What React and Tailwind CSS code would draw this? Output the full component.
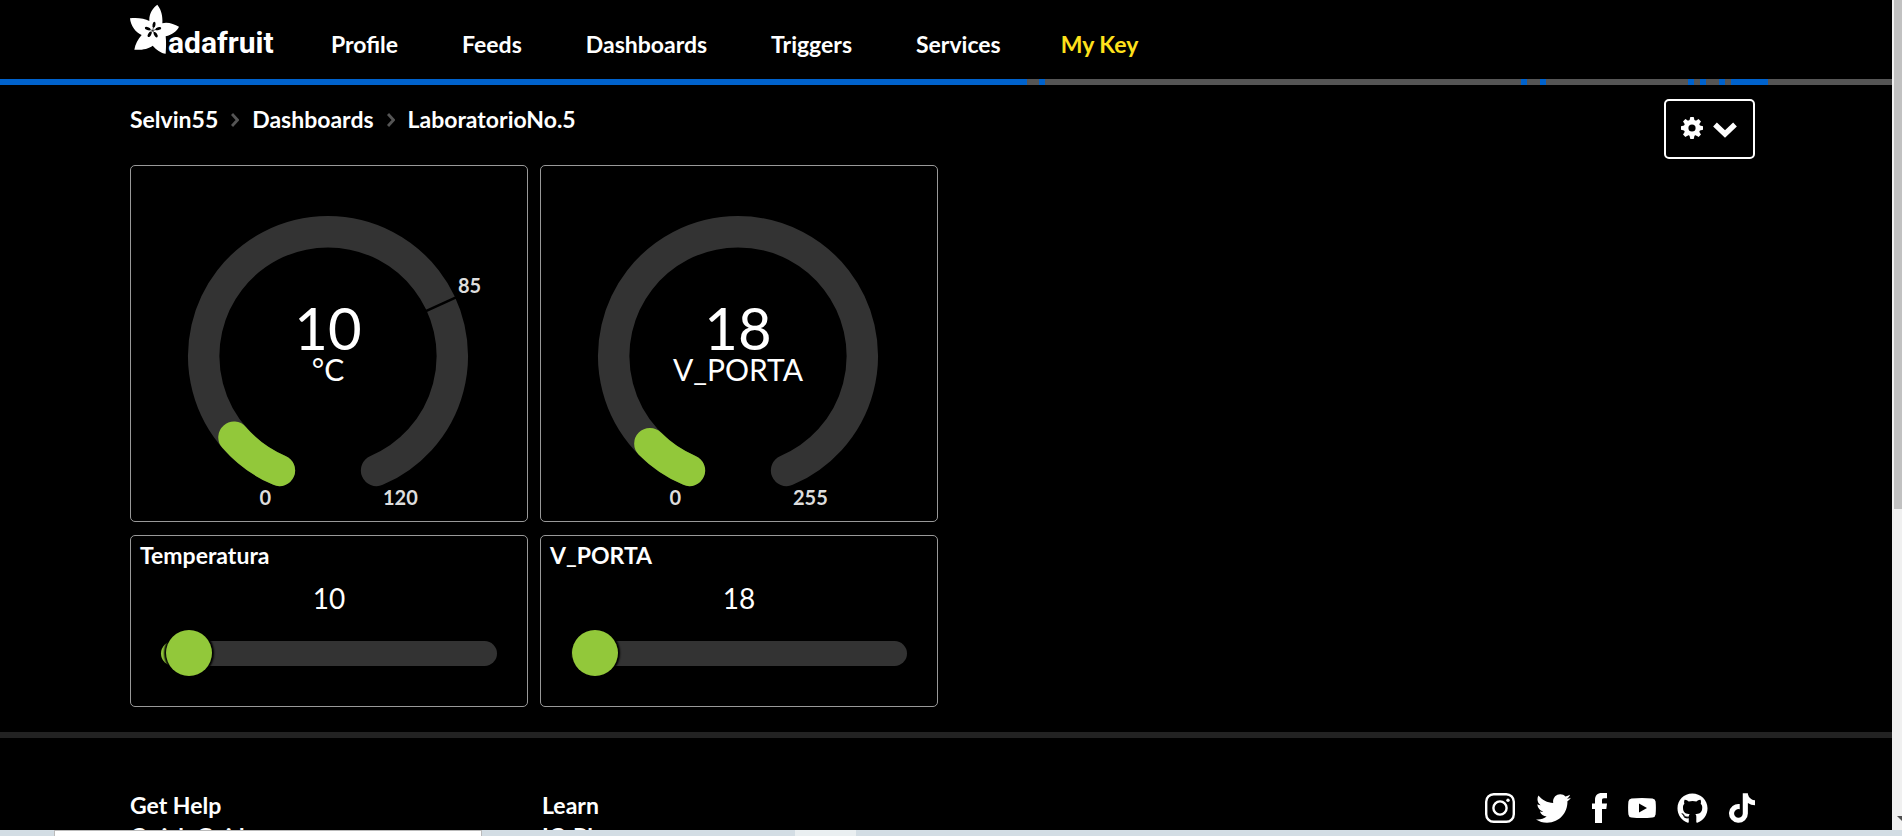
import React, { useState } from "react";
import { FaTwitter, FaGithub, FaTiktok } from "react-icons/fa";

const NAV = ["Profile", "Feeds", "Dashboards", "Triggers", "Services"];

const ACTIVITY = [
  [0, 1027],
  [1039, 6],
  [1521, 6],
  [1540, 6],
  [1688, 6],
  [1700, 6],
  [1719, 6],
  [1731, 37],
];

function Logo() {
  return (
    <svg viewBox="0 0 148 56" className="h-[56px] w-[148px] shrink-0" role="img" aria-label="adafruit">
      <g transform="translate(-10 -4) scale(0.33333)">
        <path
          fill="#fff"
          d="M112 14C121 26 129 42 127 70C142 65 162 72 177 80C172 93 156 104 137 109C139 126 138 146 137 161C124 161 107 147 98 137C86 147 61 151 43 149C46 132 54 118 65 105C46 97 32 77 30 55C50 52 74 55 88 63C87 40 98 24 112 14Z"
        />
        <g fill="#000">
          <ellipse cx="102" cy="74" rx="4.5" ry="9" transform="rotate(10 102 74)" />
          <ellipse cx="115" cy="86" rx="9" ry="4.5" transform="rotate(-14 115 86)" />
          <ellipse cx="107" cy="104" rx="4.5" ry="9" transform="rotate(-32 107 104)" />
          <ellipse cx="89" cy="103" rx="4.5" ry="9" transform="rotate(32 89 103)" />
          <ellipse cx="83" cy="86" rx="9" ry="4.5" transform="rotate(20 83 86)" />
        </g>
        <path stroke="#000" strokeWidth="2" d="M98 92L102 74M98 92L115 86M98 92L107 104M98 92L89 103M98 92L83 86" />
      </g>
      <text x="38" y="49" fill="#fff" className="font-['Roboto',sans-serif] text-[30px] font-bold">
        adafruit
      </text>
    </svg>
  );
}

function polar(deg, r) {
  const a = (deg * Math.PI) / 180;
  return [198 - r * Math.sin(a), 191 + r * Math.cos(a)];
}

function arc(from, to) {
  const r = 124.3;
  const [x1, y1] = polar(from, r);
  const [x2, y2] = polar(to, r);
  return `M${x1} ${y1}A${r} ${r} 0 ${to - from > 180 ? 1 : 0} 1 ${x2} ${y2}`;
}

function Gauge({ value, max, unit, mark }) {
  const at = (v) => 23 + (314 * v) / max;
  let tick = null;
  if (mark) {
    const [x1, y1] = polar(at(mark), 107);
    const [x2, y2] = polar(at(mark), 142);
    tick = (
      <>
        <line x1={x1} y1={y1} x2={x2} y2={y2} stroke="#000" strokeWidth="2.5" />
        <text x="328" y="128" className="fill-[#ddd] text-[20px] font-bold">
          {mark}
        </text>
      </>
    );
  }
  return (
    <section className="rounded-[5px] border border-[#999]">
      <svg viewBox="1 1 396 355" className="block w-full" role="img" aria-label={`${value} ${unit}`}>
        <path d={arc(23, 337)} fill="none" stroke="#333" strokeWidth="31.4" strokeLinecap="round" />
        <path d={arc(23, at(value))} fill="none" stroke="#92c83a" strokeWidth="31.4" strokeLinecap="round" />
        {tick}
        <text x="198" y="185" textAnchor="middle" className="fill-white text-[58px]">
          {value}
        </text>
        <text x="198" y="216" textAnchor="middle" className="fill-white text-[30px]">
          {unit}
        </text>
        <text x="141" y="340" textAnchor="end" className="fill-[#ddd] text-[20px] font-bold">
          0
        </text>
        <text x="253" y="340" className="fill-[#ddd] text-[20px] font-bold">
          {max}
        </text>
      </svg>
    </section>
  );
}

function SliderBlock({ id, title, initial, min, max }) {
  const [value, setValue] = useState(initial);
  const fill = `calc(23px + (100% - 46px) * ${(value - min) / (max - min)})`;
  return (
    <section className="flex h-[172px] flex-col rounded-[5px] border border-[#999] px-[9px] pt-[5px]">
      <label htmlFor={id} className="text-[23px] leading-[28px] font-bold">
        {title}
      </label>
      <output htmlFor={id} className="mt-[11px] text-center text-[28px] leading-[36px]">
        {value}
      </output>
      <input
        id={id}
        type="range"
        min={min}
        max={max}
        value={value}
        onChange={(e) => setValue(Number(e.target.value))}
        style={{ "--fill": fill }}
        className="mx-[21px] mt-[14px] h-[46px] cursor-pointer appearance-none bg-transparent [&::-webkit-slider-runnable-track]:h-[25px] [&::-webkit-slider-runnable-track]:rounded-full [&::-webkit-slider-runnable-track]:bg-[linear-gradient(to_right,#92c83a_var(--fill),#333_var(--fill))] [&::-webkit-slider-thumb]:-mt-[11px] [&::-webkit-slider-thumb]:size-[46px] [&::-webkit-slider-thumb]:appearance-none [&::-webkit-slider-thumb]:rounded-full [&::-webkit-slider-thumb]:bg-[#92c83a] [&::-webkit-slider-thumb]:shadow-[0_0_2px_2px_#000]"
      />
    </section>
  );
}

function Crumb() {
  return (
    <svg viewBox="0 0 8 14" className="mt-[2px] h-[14px] w-2" fill="none" stroke="#555" strokeWidth="2.8" aria-hidden="true">
      <path d="M1 1L6.5 7L1 13" />
    </svg>
  );
}

function Gear() {
  return (
    <svg viewBox="0 0 22 22" className="size-[22px]" fill="#fff" aria-hidden="true">
      {[0, 45, 90, 135].map((a) => (
        <path key={a} d="M8.600 3L9.300 0H12.700L13.400 3V19L12.700 22H9.300L8.600 19Z" transform={`rotate(${a} 11 11)`} />
      ))}
      <circle cx="11" cy="11" r="8.300" />
      <circle cx="11" cy="11" r="3.600" fill="#000" />
    </svg>
  );
}

export default function App() {
  return (
    <div className="flex h-screen flex-col overflow-hidden bg-black font-['Lato',sans-serif] text-white">
      <div className="flex min-h-0 flex-1">
        <div className="min-w-0 flex-1 overflow-hidden">
          <header className="flex h-[79px] items-start gap-[53px] pt-1 pl-[130px]">
            <a href="#home">
              <Logo />
            </a>
            <nav className="flex gap-16 pt-[26px] text-[23px] leading-[28px] font-bold">
              {NAV.map((n) => (
                <a key={n} href={`#${n}`}>
                  {n}
                </a>
              ))}
              <button type="button" className="-ml-1 text-[#ffe11b]">
                My Key
              </button>
            </nav>
          </header>
          <svg className="block h-[6px] w-full bg-[#555]" aria-hidden="true">
            {ACTIVITY.map(([x, w]) => (
              <rect key={x} x={x} y="0" width={w} height="6" fill="#0062cc" />
            ))}
          </svg>

          <div className="flex items-start justify-between pt-[14px] pr-[137px] pl-[130px]">
            <nav aria-label="Breadcrumb" className="flex items-center gap-[13px] pt-[6px] text-[23px] leading-[28px] font-bold">
              <a href="#user">Selvin55</a>
              <Crumb />
              <a href="#dashboards">Dashboards</a>
              <Crumb />
              <a href="#lab">LaboratorioNo.5</a>
            </nav>
            <button
              type="button"
              aria-label="Dashboard settings"
              className="flex h-[60px] w-[91px] items-center justify-center gap-[10px] rounded-[5px] border-2 border-white pr-px pb-[2px]"
            >
              <Gear />
              <svg viewBox="0 0 24 16" className="mt-[3px] h-4 w-6" fill="none" stroke="#fff" strokeWidth="5.4" aria-hidden="true">
                <path d="M2 2.5L12 12L22 2.5" />
              </svg>
            </button>
          </div>

          <main className="grid grid-cols-[398px_398px] gap-x-3 gap-y-[13px] pt-[6px] pl-[130px]">
            <Gauge value={10} max={120} unit="°C" mark={85} />
            <Gauge value={18} max={255} unit="V_PORTA" />
            <SliderBlock id="temperatura" title="Temperatura" initial={10} min={8} max={120} />
            <SliderBlock id="v-porta" title="V_PORTA" initial={18} min={17} max={255} />
          </main>

          <footer className="mt-[25px] flex items-start justify-between border-t-[6px] border-[#222] pt-[52px] pr-[137px] pl-[130px]">
            <div className="grid grid-cols-[400px_400px] gap-x-3 text-[23px] leading-[31px] font-bold">
              <div>
                <h2>Get Help</h2>
                <a href="#guides" className="block">Quick Guides</a>
              </div>
              <div>
                <h2>Learn</h2>
                <a href="#plus" className="block">IO Plus</a>
              </div>
            </div>
            <div className="flex h-9 items-center gap-[21px]">
              <a href="#instagram" aria-label="Instagram">
                <svg viewBox="0 0 30 30" className="size-[30px]" fill="none" stroke="#fff">
                  <rect x="1.2" y="1.2" width="27.6" height="27.6" rx="7.5" strokeWidth="2.4" />
                  <circle cx="15" cy="15" r="6.6" strokeWidth="2.4" />
                  <circle cx="23" cy="7.2" r="1.7" fill="#fff" stroke="none" />
                </svg>
              </a>
              <a href="#twitter" aria-label="Twitter">
                <FaTwitter className="size-[35px]" />
              </a>
              <a href="#facebook" aria-label="Facebook">
                <svg viewBox="0 0 15 30" className="h-[30px] w-[15px]">
                  <path fill="#fff" d="M3 30V16H0V10.500H3V7C3 2.300 5.500 0 9.800 0H15V5.300H12C10.300 5.300 10 6 10 7.500V10.500H15L14.300 16H10V30Z" />
                </svg>
              </a>
              <a href="#youtube" aria-label="YouTube">
                <svg viewBox="0 0 28 20" className="h-5 w-7">
                  <path
                    fill="#fff"
                    fillRule="evenodd"
                    d="M3.5 .5Q14-.5 24.500 .5Q27.300 .8 27.600 3.500Q28.200 10 27.600 16.500Q27.300 19.200 24.500 19.500Q14 20.500 3.500 19.500Q.7 19.200 .4 16.500Q-.2 10 .4 3.500Q.7 .8 3.500 .5ZM11 5.500V14.500L19 10Z"
                  />
                </svg>
              </a>
              <a href="#github" aria-label="GitHub">
                <FaGithub className="size-[31px]" />
              </a>
              <a href="#tiktok" aria-label="TikTok">
                <FaTiktok className="h-[30px] w-[26px]" />
              </a>
            </div>
          </footer>
        </div>

        <div className="flex w-[10px] flex-col items-end justify-between bg-[#f0f0f0] pb-[9px]" aria-hidden="true">
          <div className="h-[62%] w-2 bg-[#c1c1c1]" />
          <svg viewBox="0 0 5 5" className="size-[5px]">
            <path d="M0 0H5V5Z" fill="#505050" />
          </svg>
        </div>
      </div>

      <div className="flex h-[6px] shrink-0 bg-[#d3dde4] pl-[54px]" aria-hidden="true">
        <div className="w-[428px] border-x border-t border-[#bbb] bg-white" />
        <div className="ml-[313px] w-[61px] bg-[#eaeff1]" />
      </div>
    </div>
  );
}
